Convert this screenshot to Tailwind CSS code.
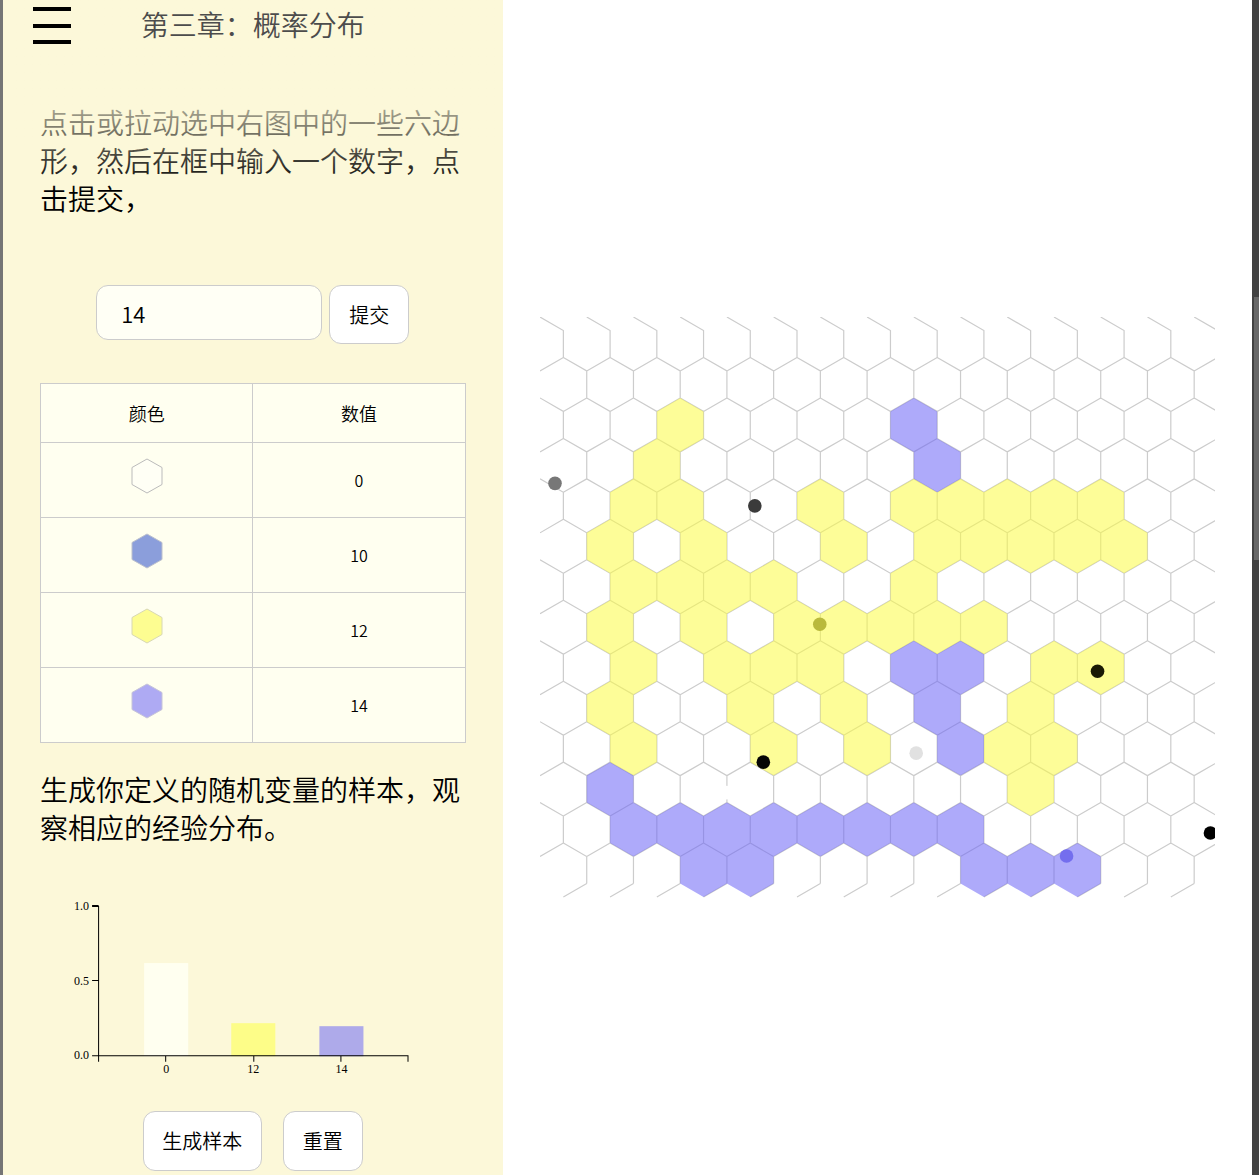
<!DOCTYPE html>
<html lang="zh-CN">
<head>
<meta charset="utf-8">
<meta name="viewport" content="width=device-width, initial-scale=1">
<title>第三章：概率分布</title>
<script src="https://cdn.jsdelivr.net/npm/@tailwindcss/browser@4"></script>
</head>
<body class="flex h-screen overflow-hidden bg-white font-['Noto_Sans_CJK_SC',sans-serif] font-[350] text-black">
  <div class="w-[3px] shrink-0 bg-[#757575]"></div>

  <main class="flex min-w-0 flex-1">
    <section class="relative w-2/5 shrink-0 bg-[#fcf8d9] px-[37px]">
      <header class="pointer-events-none absolute inset-x-0 top-0 h-[190px] bg-linear-to-b from-[#fcf8d9] from-35% to-[#fcf8d9]/0">
        <div class="relative flex h-12 items-center justify-center">
          <button type="button" aria-label="菜单" class="pointer-events-auto absolute top-[7px] left-[30px] flex h-[37px] w-[38px] flex-col justify-between">
            <span class="block h-1 w-full bg-black"></span>
            <span class="block h-1 w-full bg-black"></span>
            <span class="block h-1 w-full bg-black"></span>
          </button>
          <h1 class="text-[28px] leading-[38px] text-[#4c4c4c]">第三章：概率分布</h1>
        </div>
      </header>

      <p class="pt-[103px] text-[28px] leading-[38px]">点击或拉动选中右图中的一些六边形，然后在框中输入一个数字，点击提交，</p>

      <form class="mt-[68px] flex items-baseline justify-center gap-[7px]" onsubmit="return false">
        <input type="text" value="14" aria-label="数值" class="h-[55px] w-[226px] rounded-xl border border-[#ccc] bg-[#fffff5] px-6 text-[22px] outline-none">
        <button type="submit" class="h-[59px] w-20 rounded-xl border border-[#ccc] bg-white text-xl">提交</button>
      </form>

      <table class="mt-[39px] w-full table-fixed border-collapse bg-[#fffff0] text-center [&_td]:border [&_td]:border-[#ccc] [&_th]:border [&_th]:border-[#ccc]">
        <thead>
          <tr class="h-[59px] text-lg"><th class="font-[350]">颜色</th><th class="font-[350]">数值</th></tr>
        </thead>
        <tbody>
          <tr class="h-[75px]"><td class="pb-2"><svg class="mx-auto" width="34" height="38" viewBox="-17 -19 34 38"><path d="M0-17L15-8.5V8.5L0 17L-15 8.5V-8.5Z" fill="#fffff5" stroke="#bbb"/></svg></td><td>0</td></tr>
          <tr class="h-[75px]"><td class="pb-2"><svg class="mx-auto" width="34" height="38" viewBox="-17 -19 34 38"><path d="M0-17L15-8.5V8.5L0 17L-15 8.5V-8.5Z" fill="#8b9edb" stroke="#bcc0cc"/></svg></td><td>10</td></tr>
          <tr class="h-[75px]"><td class="pb-2"><svg class="mx-auto" width="34" height="38" viewBox="-17 -19 34 38"><path d="M0-17L15-8.5V8.5L0 17L-15 8.5V-8.5Z" fill="#fdfd91" stroke="#d8d8b4"/></svg></td><td>12</td></tr>
          <tr class="h-[75px]"><td class="pb-2"><svg class="mx-auto" width="34" height="38" viewBox="-17 -19 34 38"><path d="M0-17L15-8.5V8.5L0 17L-15 8.5V-8.5Z" fill="#aeaaf3" stroke="#c6c4d8"/></svg></td><td>14</td></tr>
        </tbody>
      </table>

      <p class="mt-[27px] text-[28px] leading-[38px]">生成你定义的随机变量的样本，观察相应的经验分布。</p>

      <svg class="mt-[44px] block w-full font-['Liberation_Serif',serif] text-xs font-normal" viewBox="0 0 425 190" role="img" aria-label="经验分布">
        <rect x="104" y="73" width="44" height="93" fill="#fffff0"/>
        <rect x="191" y="133" width="44" height="33" fill="#fdfd88"/>
        <rect x="279" y="136" width="44" height="30" fill="#aeaaea"/>
        <path d="M52 16.5H58.5V165.5H52M52 15.5H58.5M52 90.5H58.5M58.5 171.5V165.5H367.5V171.5M125.5 165.5V171.5M213.5 165.5V171.5M300.5 165.5V171.5" fill="none" stroke="#000"/>
        <g text-anchor="end"><text x="49" y="20">1.0</text><text x="49" y="95">0.5</text><text x="49" y="169">0.0</text></g>
        <g text-anchor="middle"><text x="126" y="183">0</text><text x="213" y="183">12</text><text x="301" y="183">14</text></g>
      </svg>

      <div class="mt-[31px] flex justify-center gap-[21px]">
        <button type="button" class="h-[60px] w-[119px] rounded-xl border border-[#ccc] bg-white text-xl">生成样本</button>
        <button type="button" class="h-[60px] w-20 rounded-xl border border-[#ccc] bg-white text-xl">重置</button>
      </div>
    </section>

    <section class="min-w-0 flex-1 pt-[317px]">
      <svg id="board" class="mx-auto block w-9/10" viewBox="0 0 675 581" role="img" aria-label="六边形样本空间"></svg>
    </section>
  </main>

  <div class="w-[7px] shrink-0 bg-[#424242] pt-[297px] pl-[2px]">
    <div class="h-[263px] bg-[#686868]"></div>
  </div>

  <script>
    const R = 27, DX = 2 * R * Math.sin(Math.PI / 3), DY = 1.5 * R;
    const center = (r, i) => [DX * (i + (r % 2) / 2), R + DY * r];
    const yellow = { 2: [3], 3: [2], 4: [2, 3, 6, 8, 9, 10, 11, 12], 5: [1, 3, 6, 8, 9, 10, 11, 12],
      6: [2, 3, 4, 5, 8], 7: [1, 3, 5, 6, 7, 8, 9], 8: [2, 4, 5, 6, 11, 12], 9: [1, 4, 6, 10],
      10: [2, 5, 7, 10, 11], 11: [10] };
    const purple = { 2: [8], 3: [8], 8: [8, 9], 9: [8], 10: [9], 11: [1],
      12: [2, 3, 4, 5, 6, 7, 8, 9], 13: [3, 4, 9, 10, 11] };

    const cells = groups => Object.entries(groups).map(([r, list]) => list.map(i => {
      const [x, y] = center(+r, i);
      return `M${x} ${y - R}l${DX / 2} ${R / 2}v${R}l${-DX / 2} ${R / 2}l${-DX / 2} ${-R / 2}v${-R}Z`;
    }).join('')).join('');

    // Each cell owns its upper-right and right edges, plus the upper-left one below the first row
    let mesh = '';
    for (let r = 0; r < 14; r++) {
      for (let i = -1; i < 15; i++) {
        const [x, y] = center(r, i);
        mesh += `M${x} ${y - R}l${DX / 2} ${R / 2}`;
        if (i >= 0) mesh += `v${R}`;
        if (r > 0) mesh += `M${x} ${y - R}l${-DX / 2} ${R / 2}`;
        if (r === 13 && i >= 0) mesh += `M${x + DX / 2} ${y + R / 2}l${-DX / 2} ${R / 2}`;
      }
    }

    const dots = [[15, 166.5, '#777'], [215, 189, '#3b3b3b'], [280, 307.5, '#b9b93c'], [223.5, 445.5, '#050505'],
      [376.5, 436.5, '#e1e1e1'], [558, 354.5, '#1a1a05'], [671, 516.5, '#000'], [527, 539.5, '#746eee'], [187, 476, '#fff']];

    document.getElementById('board').innerHTML =
      `<path d="${mesh}" fill="none" stroke="#ccc" stroke-width="1.2"/>` +
      `<path d="${cells(yellow)}" fill="#fbfb44" fill-opacity=".55"/><path d="${cells(purple)}" fill="#6c64f6" fill-opacity=".55"/>` +
      dots.map(([x, y, c]) => `<circle cx="${x}" cy="${y}" r="6.8" fill="${c}"/>`).join('');
  </script>
</body>
</html>
